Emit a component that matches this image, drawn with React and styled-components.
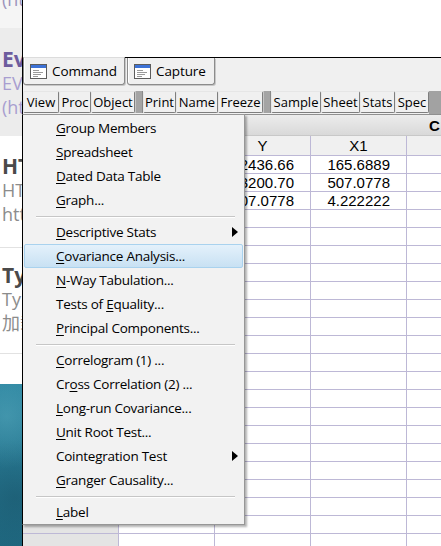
import styled, { createGlobalStyle } from "styled-components";

const GlobalStyle = createGlobalStyle`
  html, body {
    margin: 0;
    width: 441px;
    height: 546px;
    overflow: hidden;
    background: #fff;
  }
  body {
    font-family: "Open Sans", "Noto Sans", sans-serif;
  }
`;

const Page = styled.div`
  position: relative;
  display: flex;
  width: 441px;
  height: 546px;
  overflow: hidden;
`;

/* web page peeking out on the left */
const Strip = styled.div`
  width: 22px;
  flex: none;
  display: flex;
  flex-direction: column;
  overflow: hidden;
  white-space: nowrap;
`;

const StripBlock = styled.div`
  height: ${(p) => p.h}px;
  flex: none;
  background: ${(p) => p.bg || "#fff"};
  padding: ${(p) => p.pt || 0}px 0 0 2px;
  box-sizing: border-box;
  border-bottom: ${(p) => (p.line ? "1px solid #e2e2e2" : "none")};
`;

const StripLine = styled.div`
  height: ${(p) => p.lh || 23}px;
  line-height: ${(p) => p.lh || 23}px;
  font-size: ${(p) => (p.bold ? 21 : 18)}px;
  font-weight: ${(p) => (p.bold ? 700 : 400)};
  color: ${(p) => p.color};
  font-family: "Open Sans", "Noto Sans CJK SC", sans-serif;
`;

const Teal = styled.div`
  flex: 1;
  background:
    radial-gradient(circle at 30% 20%, rgba(120, 200, 215, 0.3), transparent 40%),
    radial-gradient(circle at 70% 70%, rgba(20, 70, 90, 0.35), transparent 50%),
    linear-gradient(180deg, #2d85a0, #25738c 60%, #1f6880);
`;

const Window = styled.div`
  flex: 1;
  display: flex;
  flex-direction: column;
  border-left: 1px solid #000;
  min-width: 0;
`;

const TopBlank = styled.div`
  height: 57px;
  flex: none;
  background: #fff;
`;

const TabRow = styled.div`
  height: 31px;
  flex: none;
  display: flex;
  align-items: flex-start;
  background: #f0f0f0;
  border-top: 1px solid #000;
  box-sizing: border-box;
`;

const Tab = styled.div`
  width: ${(p) => p.w}px;
  height: ${(p) => (p.active ? 28 : 27)}px;
  margin-top: ${(p) => (p.active ? -1 : 0)}px;
  margin-right: 2px;
  box-sizing: border-box;
  display: flex;
  align-items: center;
  gap: 5px;
  padding-left: 6px;
  background: #f0f0f0;
  border: 1px solid #8c8c8c;
  border-top: ${(p) => (p.active ? "1px solid #dcdcdc" : "none")};
  border-radius: 0 0 3px 3px;
  box-shadow: inset 1px 0 #fff, 1px 1px 0 #c8c8c8;
  font-size: 13.5px;
  letter-spacing: -0.1px;
  color: #000;
`;

const Toolbar = styled.div`
  height: 26px;
  flex: none;
  display: flex;
  align-items: flex-start;
  padding-top: 3px;
  box-sizing: border-box;
  background: #f0f0f0;
`;

const ToolButton = styled.div`
  width: ${(p) => p.w}px;
  height: 22px;
  flex: none;
  box-sizing: border-box;
  display: flex;
  align-items: center;
  justify-content: center;
  font-size: 13px;
  color: #000;
  background: #f0f0f0;
  border: 1px solid;
  border-color: #e6e6e6 #7e7e7e #7e7e7e #e6e6e6;
  border-radius: 2px;
  white-space: nowrap;
  overflow: hidden;
`;

const ToolSep = styled.div`
  width: 8px;
  height: 22px;
  flex: none;
  box-sizing: border-box;
  background: #a4a4a4;
  border-left: 1px solid #c6c6c6;
  border-right: 1px solid #8a8a8a;
`;

const ToolFill = styled.div`
  flex: 1;
  height: 23px;
  background: #a2a2a2;
`;

const Sheet = styled.div`
  flex: 1;
  display: flex;
  flex-direction: column;
  border-top: 1px solid #8f8f8f;
  background: #fff;
  font-family: "Liberation Sans", Arial, sans-serif;
  font-size: 15px;
  color: #000;
`;

const TitleBar = styled.div`
  height: 21px;
  flex: none;
  box-sizing: border-box;
  padding-left: 406px;
  line-height: 21px;
  font-weight: 700;
  background: linear-gradient(180deg, #ececec, #d9d9d9);
  border-bottom: 1px solid #c8c8c8;
  white-space: nowrap;
`;

const GridRow = styled.div`
  display: grid;
  grid-template-columns: 96px 96px 96px 96px 96px;
  height: ${(p) => (p.head ? 20 : 18)}px;
  flex: none;
  box-sizing: border-box;
  border-bottom: 1px solid #bdb8d6;
  background: ${(p) => (p.head ? "#f0f0f0" : "#fff")};
`;

const Cell = styled.div`
  border-right: 1px solid #bdb8d6;
  box-sizing: border-box;
  padding-right: ${(p) => (p.center ? 0 : 16)}px;
  text-align: ${(p) => (p.center ? "center" : "right")};
  background: ${(p) => (p.rowhead ? "#e4e4e4" : "transparent")};
  white-space: nowrap;
  overflow: hidden;
  line-height: ${(p) => (p.center ? 19 : 17)}px;
`;

/* popup menu */
const Menu = styled.div`
  position: absolute;
  left: 22px;
  top: 114px;
  width: 223px;
  height: 411px;
  box-sizing: border-box;
  padding-top: 1px;
  background: #f2f2f2;
  border: 1px solid #979797;
  border-left-color: #000;
  box-shadow: 2px 2px 2px rgba(0, 0, 0, 0.3);
  display: flex;
  flex-direction: column;
  font-size: 13.5px;
  letter-spacing: -0.25px;
  color: #000;
`;

const Item = styled.div`
  position: relative;
  height: 24px;
  flex: none;
  box-sizing: border-box;
  margin: 0 1px 0 1px;
  padding-left: 31px;
  line-height: 22px;
  border: 1px solid transparent;
  border-radius: 2px;
  white-space: nowrap;
  ${(p) =>
    p.hot &&
    `
    background: linear-gradient(180deg, #e4f1fb, #c8e1f3);
    border-color: #a9d2ee;
  `}
  u {
    text-decoration: underline;
    text-underline-offset: 2px;
  }
`;

const Arrow = styled.span`
  position: absolute;
  right: 4px;
  top: 6px;
  width: 0;
  height: 0;
  border-top: 5px solid transparent;
  border-bottom: 5px solid transparent;
  border-left: 6px solid #000;
`;

const Sep = styled.div`
  height: 8px;
  flex: none;
  display: flex;
  align-items: center;
  padding: 0 9px 0 13px;
  &::after {
    content: "";
    flex: 1;
    height: 1px;
    background: #c6c6c6;
    box-shadow: 0 1px 0 #fff;
  }
`;

const TabIcon = () => (
  <svg width="17" height="15" viewBox="0 0 17 15">
    <rect x="0.5" y="0.5" width="16" height="14" fill="#fff" stroke="#5c5c5c" />
    <rect x="1" y="1" width="15" height="3" fill="#3d72d6" />
    <line x1="3" y1="6.5" x2="9" y2="6.5" stroke="#9a9a9a" />
    <line x1="3" y1="8.5" x2="13" y2="8.5" stroke="#9a9a9a" />
    <line x1="3" y1="10.5" x2="11" y2="10.5" stroke="#9a9a9a" />
    <line x1="3" y1="12.5" x2="8" y2="12.5" stroke="#9a9a9a" />
  </svg>
);

const buttons = [
  ["View", 36],
  ["Proc", 32],
  ["Object", 44],
  null,
  ["Print", 33],
  ["Name", 42],
  ["Freeze", 45],
  null,
  ["Sample", 50],
  ["Sheet", 39],
  ["Stats", 35],
  ["Spec", 34],
];

// [before, mnemonic, after, submenu, highlighted]
const menu = [
  ["", "G", "roup Members"],
  ["", "S", "preadsheet"],
  ["", "D", "ated Data Table"],
  ["", "G", "raph..."],
  "sep",
  ["", "D", "escriptive Stats", true],
  ["", "C", "ovariance Analysis...", false, true],
  ["", "N", "-Way Tabulation..."],
  ["Tests of ", "E", "quality..."],
  ["", "P", "rincipal Components..."],
  "sep",
  ["", "C", "orrelogram (1) ..."],
  ["Cr", "o", "ss Correlation (2) ..."],
  ["", "L", "ong-run Covariance..."],
  ["", "U", "nit Root Test..."],
  ["Cointegration Test", "", "", true],
  ["", "G", "ranger Causality..."],
  "sep",
  ["", "L", "abel"],
];

const data = [
  ["12436.66", "165.6889"],
  ["13200.70", "507.0778"],
  ["507.0778", "4.222222"],
];

export default function App() {
  const rows = [];
  for (let i = 0; i < 22; i++) {
    const d = data[i] || ["", ""];
    rows.push(
      <GridRow key={i}>
        <Cell rowhead />
        <Cell />
        <Cell>{d[0]}</Cell>
        <Cell>{d[1]}</Cell>
        <Cell />
      </GridRow>
    );
  }

  return (
    <Page>
      <GlobalStyle />
      <Strip>
        <StripBlock h={28} bg="#f5f5f5">
          <StripLine color="#9c94bd" style={{ marginTop: -12 }}>(htt</StripLine>
        </StripBlock>
        <StripBlock h={108} bg="#ececec" pt={19}>
          <StripLine bold color="#6d5c9e" lh={24}>Ev</StripLine>
          <StripLine color="#a89ed0" lh={24}>EV</StripLine>
          <StripLine color="#a89ed0" lh={24}>(ht</StripLine>
        </StripBlock>
        <StripBlock h={112} pt={18} line>
          <StripLine bold color="#4a4a4a" lh={24}>HT</StripLine>
          <StripLine color="#8c8c8c" lh={24}>HT</StripLine>
          <StripLine color="#8c8c8c" lh={24}>htt</StripLine>
        </StripBlock>
        <StripBlock h={106} pt={15} line>
          <StripLine bold color="#4a4a4a" lh={24}>Ty</StripLine>
          <StripLine color="#8c8c8c" lh={24}>Ty</StripLine>
          <StripLine color="#8c8c8c" lh={24}>加载</StripLine>
        </StripBlock>
        <StripBlock h={30} />
        <Teal />
      </Strip>

      <Window>
        <TopBlank />
        <TabRow>
          <Tab active w={102}>
            <TabIcon />
            Command
          </Tab>
          <Tab w={88}>
            <TabIcon />
            Capture
          </Tab>
        </TabRow>
        <Toolbar>
          {buttons.map((b, i) =>
            b ? (
              <ToolButton key={i} w={b[1]}>
                {b[0]}
              </ToolButton>
            ) : (
              <ToolSep key={i} />
            )
          )}
          <ToolFill />
        </Toolbar>
        <Sheet>
          <TitleBar>C</TitleBar>
          <GridRow head>
            <Cell rowhead center />
            <Cell center />
            <Cell center>Y</Cell>
            <Cell center>X1</Cell>
            <Cell center />
          </GridRow>
          {rows}
        </Sheet>
      </Window>

      <Menu>
        {menu.map((m, i) =>
          m === "sep" ? (
            <Sep key={i} />
          ) : (
            <Item key={i} hot={m[4]}>
              {m[0]}
              {m[1] && <u>{m[1]}</u>}
              {m[2]}
              {m[3] && <Arrow />}
            </Item>
          )
        )}
      </Menu>
    </Page>
  );
}
